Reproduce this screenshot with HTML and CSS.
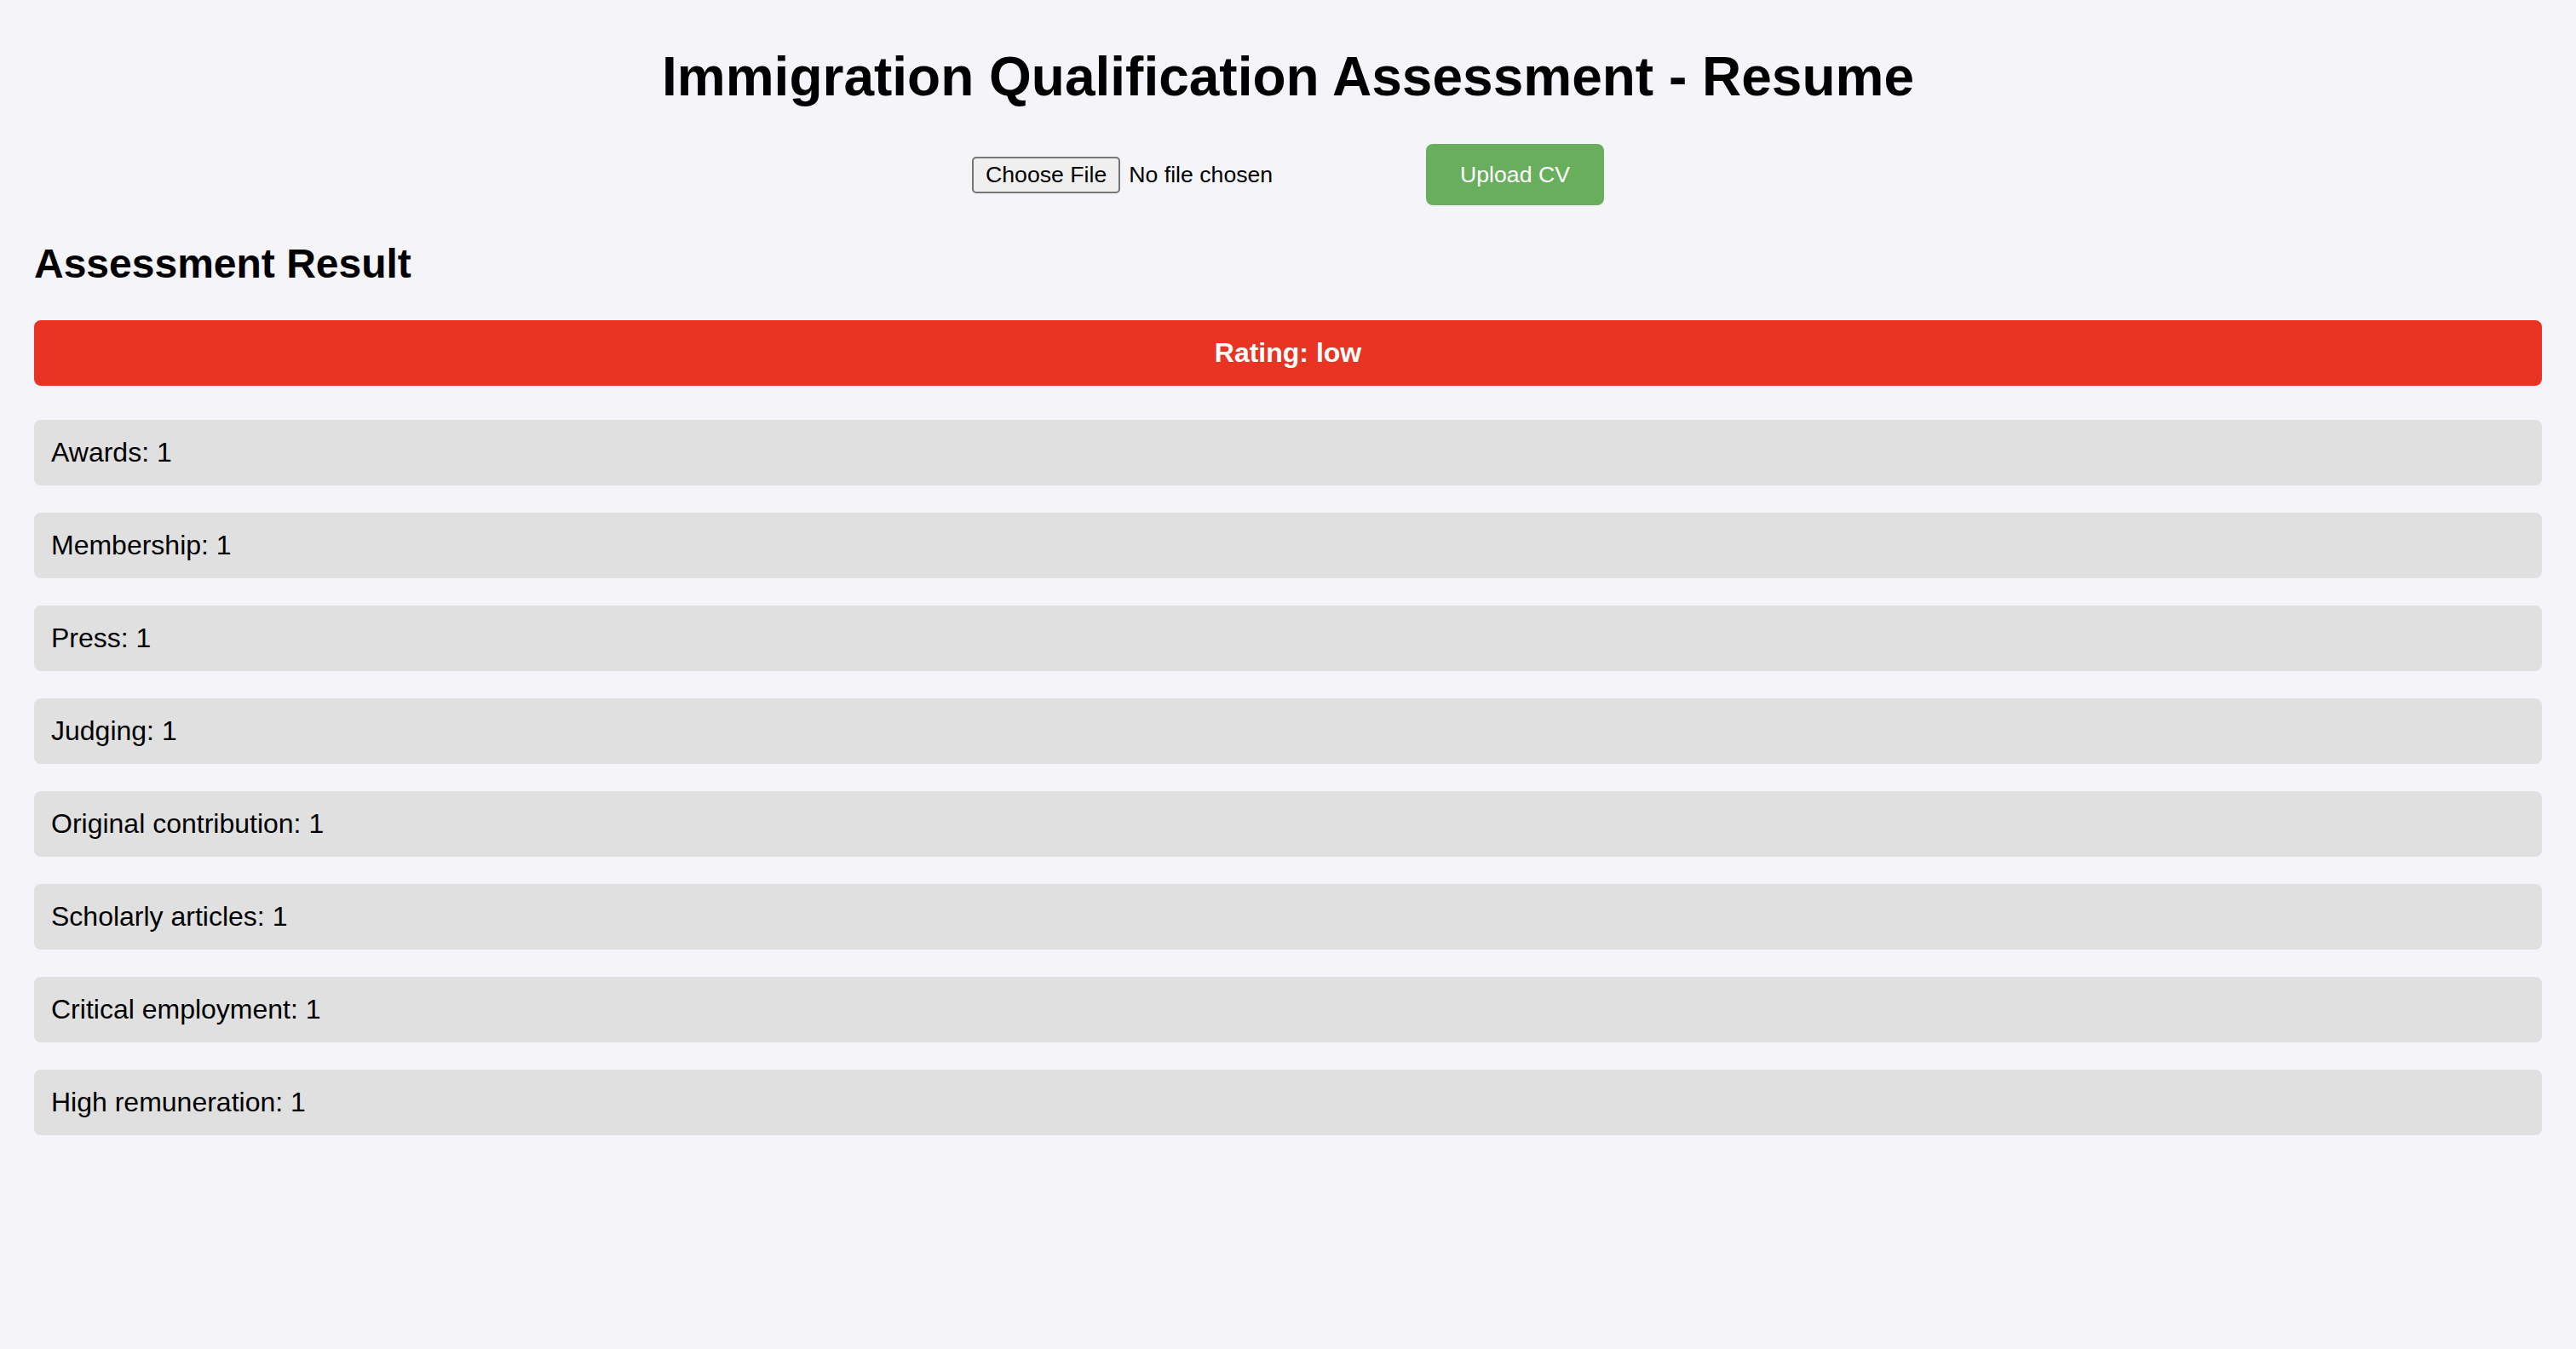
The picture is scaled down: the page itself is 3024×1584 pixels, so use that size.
FILE: index.html
```html
<!DOCTYPE html>
<html lang="en">

<head>
	<meta charset="UTF-8">
	<meta name="viewport" content="width=device-width, initial-scale=1.0">
	<title>Immigration Qualification Assessment - Resume</title>
	<link rel="stylesheet" href="styles.css">
</head>
<body>

	<h1>Immigration Qualification Assessment - Resume</h1>

	<!-- UPLOAD --------------------------------- -->
	<form class="upload-form">
		<input id="cvFile" class="file-input" type="file" />
		<button type="button" class="upload-btn">Upload CV</button>
	</form>

	<!-- RESULT --------------------------------- -->
	<section class="result">
		<h2>Assessment Result</h2>
		<div class="rating rating-low">Rating: low</div>
		<ul class="criteria">
			<li>Awards: 1</li>
			<li>Membership: 1</li>
			<li>Press: 1</li>
			<li>Judging: 1</li>
			<li>Original contribution: 1</li>
			<li>Scholarly articles: 1</li>
			<li>Critical employment: 1</li>
			<li>High remuneration: 1</li>
		</ul>
	</section>

</body>

</html>
```

FILE: styles.css
```css
/* GENERAL --------------------------------- */
* {
	box-sizing: border-box;
}
html,
body {
	margin: 0;
	padding: 0;
}
body {
	font-family: 'Liberation Sans', Arial, sans-serif;
	background-color: #f4f4f9;
	color: #000;
	padding: 53px 40px 40px;
}
h1 {
	font-size: 64px;
	text-align: center;
	margin: 0 0 42px;
}
h2 {
	font-size: 48px;
	margin: 0 0 39px;
}

/* UPLOAD --------------------------------- */
.upload-form {
	display: flex;
	justify-content: center;
	align-items: center;
	height: 72px;
	margin: 0 0 41px;
}
.file-input {
	width: 513px;
	margin-right: 20px;
	font-family: 'Liberation Sans', Arial, sans-serif;
	font-size: 26.67px;
	color: #000;
}
.file-input::file-selector-button {
	font-family: 'Liberation Sans', Arial, sans-serif;
	font-size: 26.67px;
	height: 43px;
	padding: 0 14px;
	margin-right: 10px;
	background-color: #efefef;
	border: 2px solid #767676;
	border-radius: 5px;
	color: #000;
}
.upload-btn {
	font-family: 'Liberation Sans', Arial, sans-serif;
	font-size: 26.67px;
	height: 72px;
	padding: 0 40px;
	background-color: #69ae5d;
	color: #fff;
	border: none;
	border-radius: 8px;
	cursor: pointer;
}

/* RESULT --------------------------------- */
.rating {
	font-size: 32px;
	font-weight: bold;
	text-align: center;
	color: #fff;
	padding: 20px;
	border-radius: 8px;
	margin-bottom: 40px;
}
.rating-low {
	background-color: #e93323;
}
.criteria {
	list-style: none;
	margin: 0;
	padding: 0;
	display: flex;
	flex-direction: column;
	gap: 32px;
}
.criteria li {
	font-size: 32px;
	padding: 20px;
	background-color: #e0e0e0;
	border-radius: 8px;
}
```
